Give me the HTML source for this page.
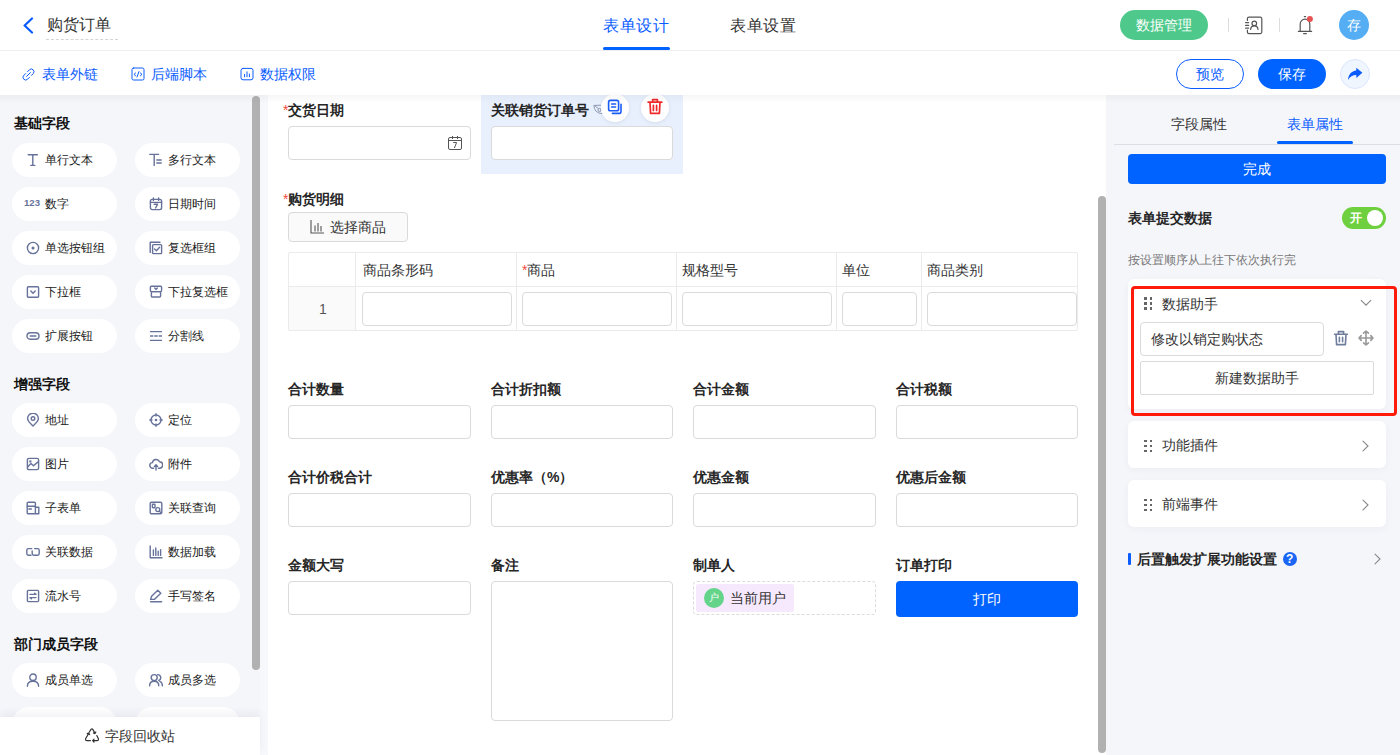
<!DOCTYPE html><html><head><meta charset="utf-8"><style>
*{box-sizing:border-box;margin:0;padding:0}
html,body{width:1400px;height:755px;overflow:hidden;background:#fff;font-family:"Liberation Sans",sans-serif;color:#333}
.a{position:absolute}
.t{position:absolute;white-space:nowrap;line-height:1}
.pill{position:absolute;width:105px;height:34px;border-radius:17px;background:#fff}
.pill .ic{position:absolute;left:14px;top:10px}
.pill .tx{position:absolute;left:33px;top:11px;font-size:12px;line-height:12px;color:#1a1a1a;white-space:nowrap}
.sh{position:absolute;left:14px;font-size:14px;font-weight:bold;color:#111;line-height:14px;white-space:nowrap}
.inp{position:absolute;border:1px solid #dadada;border-radius:4px;background:#fff}
</style></head><body>
<div class="a" style="left:0px;top:0px;width:1400px;height:50px;background:#fff"></div>
<div class="a" style="left:0px;top:50px;width:1400px;height:1px;background:#eceef1"></div>
<div class="a" style="left:0px;top:51px;width:1400px;height:44px;background:#fff"></div>
<div class="a" style="left:0px;top:95px;width:268px;height:660px;background:#f4f6fa"></div>
<div class="a" style="left:260px;top:95px;width:8px;height:660px;background:#f7f8fb"></div>
<div class="a" style="left:268px;top:95px;width:838px;height:660px;background:#fff"></div>
<div class="a" style="left:1106px;top:95px;width:294px;height:660px;background:#f5f6fa"></div>
<svg class="a" style="left:22px;top:17px" width="12" height="17" viewBox="0 0 12 17"><path d="M10 1.5 L2.6 8.5 L10 15.5" fill="none" stroke="#0a5cff" stroke-width="2.2" stroke-linecap="round" stroke-linejoin="round"/></svg>
<div class="t" style="left:47px;top:17px;font-size:16px;color:#333;">购货订单</div>
<div class="a" style="left:46px;top:39px;width:72px;height:0;border-top:1px dashed #d4d4d4"></div>
<div class="t" style="left:603px;top:18px;font-size:16px;color:#0a5cff;letter-spacing:0.5px">表单设计</div>
<div class="a" style="left:603px;top:47px;width:67px;height:3px;background:#0062ff;border-radius:2px"></div>
<div class="t" style="left:730px;top:18px;font-size:16px;color:#333;letter-spacing:0.5px">表单设置</div>
<div class="a" style="left:1120px;top:10px;width:88px;height:30px;background:#4ec98b;border-radius:15px"></div>
<div class="t" style="left:1136px;top:18px;font-size:14px;color:#fff;">数据管理</div>
<div class="a" style="left:1228px;top:18px;width:1px;height:14px;background:#dcdcdc"></div>
<div class="a" style="left:1279px;top:18px;width:1px;height:14px;background:#dcdcdc"></div>
<svg class="a" style="left:1244px;top:16px" width="20" height="20" viewBox="0 0 20 20"><g fill="none" stroke="#555" stroke-width="1.2" stroke-linecap="round" stroke-linejoin="round"><path d="M3.4 4.4V2.8A1.6 1.6 0 0 1 5 1.2H16.2A1.6 1.6 0 0 1 17.8 2.8V16A1.6 1.6 0 0 1 16.2 17.6H5A1.6 1.6 0 0 1 3.4 16V14.2"/><circle cx="10.3" cy="7.4" r="2.3"/><path d="M6.6 13.4C6.8 11 8.4 9.8 10.3 9.8S13.8 11 14 13.4"/><path d="M1.6 6.6H4.6M1.6 9.4H4.6M1.6 12.2H4.6"/></g></svg>
<svg class="a" style="left:1296px;top:15px" width="18" height="20" viewBox="0 0 18 20"><g fill="none" stroke="#555" stroke-width="1.2" stroke-linecap="round" stroke-linejoin="round"><path d="M2.4 16.4H15.6M3.8 16.4L4.2 15.4V9A4.8 4.8 0 0 1 13.8 9V15.4L14.2 16.4M7.6 18.6H10.4M8.4 1.6H9.6"/></g><circle cx="13.9" cy="3.9" r="3" fill="#e55353"/></svg>
<div class="a" style="left:1339px;top:10px;width:30px;height:30px;background:#55adf3;border-radius:50%"></div>
<div class="t" style="left:1347px;top:18px;font-size:14px;color:#fff;">存</div>
<svg class="a" style="left:22px;top:67.5px" width="13" height="13" viewBox="0 0 13 13"><g fill="none" stroke="#0a5cff" stroke-width="1.0" stroke-linecap="round"><path d="M5.6 3.6L7.4 1.8A2.4 2.4 0 0 1 11.2 5.6L9.4 7.4"/><path d="M7.4 9.4L5.6 11.2A2.4 2.4 0 0 1 1.8 7.4L3.6 5.6"/><path d="M4.6 8.4L8.4 4.6"/></g></svg>
<div class="t" style="left:42px;top:67px;font-size:14px;color:#0a5cff;">表单外链</div>
<svg class="a" style="left:131px;top:67px" width="14" height="14" viewBox="0 0 14 14"><g fill="none" stroke="#0a5cff" stroke-width="1.0" stroke-linecap="round" stroke-linejoin="round"><rect x="1" y="1" width="12" height="12" rx="1.5"/><path d="M4.6 6L3 7.4L4.6 8.8M9.4 6L11 7.4L9.4 8.8M8 4.6L6 10"/></g></svg>
<div class="t" style="left:151px;top:67px;font-size:14px;color:#0a5cff;">后端脚本</div>
<svg class="a" style="left:240px;top:67px" width="14" height="14" viewBox="0 0 14 14"><g fill="none" stroke="#0a5cff" stroke-width="1.0" stroke-linecap="round" stroke-linejoin="round"><rect x="1" y="1.4" width="12" height="11.4" rx="2"/><path d="M4.6 9.8V7.4M7 9.8V4.8M9.4 9.8V7"/></g></svg>
<div class="t" style="left:260px;top:67px;font-size:14px;color:#0a5cff;">数据权限</div>
<div class="a" style="left:1176px;top:59px;width:68px;height:30px;border:1px solid #0a5cff;border-radius:15px;background:#fff"></div>
<div class="t" style="left:1196px;top:67px;font-size:14px;color:#0a5cff;">预览</div>
<div class="a" style="left:1258px;top:59px;width:68px;height:30px;background:#0062ff;border-radius:15px"></div>
<div class="t" style="left:1278px;top:67px;font-size:14px;color:#fff;">保存</div>
<div class="a" style="left:1340px;top:59px;width:30px;height:30px;border:1px solid #dbe6fd;border-radius:50%;background:#f0f6ff"></div>
<svg class="a" style="left:1347px;top:66px" width="17" height="16" viewBox="0 0 17 16"><path d="M9.3 1.8L15.4 6.8L9.3 12V9C5.6 9 3 10.4 1 14C1.3 8.6 4.6 4.9 9.3 4.5Z" fill="#0a5cff"/></svg>
<div class="sh" style="top:116px">基础字段</div>
<div class="pill" style="left:12px;top:143px"><svg class="ic" width="14" height="14" viewBox="0 0 14 14"><g stroke="#67729a" stroke-width="1.4" fill="none" stroke-linecap="round" stroke-linejoin="round"><path d="M2.2 1.8H11.4M6.8 1.8V12.4M4.8 12.4H8.8"/></g></svg><div class="tx">单行文本</div></div>
<div class="pill" style="left:135px;top:143px"><svg class="ic" width="14" height="14" viewBox="0 0 14 14"><g stroke="#67729a" stroke-width="1.4" fill="none" stroke-linecap="round" stroke-linejoin="round"><path d="M0.8 1.4H9.6M5.2 1.4V12.4M7.8 7H12.2M7.8 10H12.2"/></g></svg><div class="tx">多行文本</div></div>
<div class="pill" style="left:12px;top:187px"><svg class="ic" width="18" height="14" viewBox="0 0 18 14" style="left:12px"><text x="0" y="9.3" font-family="Liberation Sans" font-weight="bold" font-size="9.6" fill="#67729a">123</text></svg><div class="tx">数字</div></div>
<div class="pill" style="left:135px;top:187px"><svg class="ic" width="14" height="14" viewBox="0 0 14 14"><g stroke="#67729a" stroke-width="1.4" fill="none" stroke-linecap="round" stroke-linejoin="round"><rect x="1.4" y="2.4" width="11.2" height="10.2" rx="1.8"/><path d="M1.4 5.4H12.6M4.4 1V3.4M9.6 1V3.4M5.2 7.2H8.6L6.6 11"/></g></svg><div class="tx">日期时间</div></div>
<div class="pill" style="left:12px;top:231px"><svg class="ic" width="14" height="14" viewBox="0 0 14 14"><g stroke="#67729a" stroke-width="1.4" fill="none" stroke-linecap="round" stroke-linejoin="round"><circle cx="7" cy="7" r="5.6"/><circle cx="7" cy="7" r="1.5" fill="#67729a" stroke="none"/></g></svg><div class="tx">单选按钮组</div></div>
<div class="pill" style="left:135px;top:231px"><svg class="ic" width="14" height="14" viewBox="0 0 14 14"><g stroke="#67729a" stroke-width="1.4" fill="none" stroke-linecap="round" stroke-linejoin="round"><path d="M1.2 11.4V1.2H11"/><rect x="3.6" y="3.6" width="9" height="9" rx="0.8"/><path d="M5.6 8L7.4 9.8L10.6 6.2"/></g></svg><div class="tx">复选框组</div></div>
<div class="pill" style="left:12px;top:275px"><svg class="ic" width="14" height="14" viewBox="0 0 14 14"><g stroke="#67729a" stroke-width="1.4" fill="none" stroke-linecap="round" stroke-linejoin="round"><rect x="1.4" y="1.8" width="11.2" height="10.4" rx="1"/><path d="M4.8 6L7 8.2L9.2 6"/></g></svg><div class="tx">下拉框</div></div>
<div class="pill" style="left:135px;top:275px"><svg class="ic" width="14" height="14" viewBox="0 0 14 14"><g stroke="#67729a" stroke-width="1.4" fill="none" stroke-linecap="round" stroke-linejoin="round"><rect x="1.4" y="1.2" width="11.2" height="5.4" rx="1"/><rect x="2.4" y="6.6" width="9.2" height="5.4" rx="1"/><path d="M5.8 3L7 4.4L8.4 3"/></g></svg><div class="tx">下拉复选框</div></div>
<div class="pill" style="left:12px;top:319px"><svg class="ic" width="14" height="14" viewBox="0 0 14 14"><g stroke="#67729a" stroke-width="1.4" fill="none" stroke-linecap="round" stroke-linejoin="round"><rect x="1" y="3.8" width="12" height="6.4" rx="3.2"/><path d="M4.2 7H9.8"/></g></svg><div class="tx">扩展按钮</div></div>
<div class="pill" style="left:135px;top:319px"><svg class="ic" width="14" height="14" viewBox="0 0 14 14"><g stroke="#67729a" stroke-width="1.4" fill="none" stroke-linecap="round" stroke-linejoin="round"><path d="M1.5 2.6H12.5M1.5 7H3.8M5.8 7H8.2M10.2 7H12.5M1.5 11.4H12.5"/></g></svg><div class="tx">分割线</div></div>
<div class="sh" style="top:377px">增强字段</div>
<div class="pill" style="left:12px;top:403px"><svg class="ic" width="14" height="14" viewBox="0 0 14 14"><g stroke="#67729a" stroke-width="1.4" fill="none" stroke-linecap="round" stroke-linejoin="round"><path d="M7 13C4.8 10.8 1.6 8.4 1.6 5.6A5.4 5.4 0 0 1 12.4 5.6C12.4 8.4 9.2 10.8 7 13Z"/><circle cx="7" cy="5.6" r="1.8"/></g></svg><div class="tx">地址</div></div>
<div class="pill" style="left:135px;top:403px"><svg class="ic" width="14" height="14" viewBox="0 0 14 14"><g stroke="#67729a" stroke-width="1.4" fill="none" stroke-linecap="round" stroke-linejoin="round"><circle cx="7" cy="7" r="5"/><circle cx="7" cy="7" r="1.3" fill="#67729a" stroke="none"/><path d="M7 0.8V3M7 11V13.2M0.8 7H3M11 7H13.2"/></g></svg><div class="tx">定位</div></div>
<div class="pill" style="left:12px;top:447px"><svg class="ic" width="14" height="14" viewBox="0 0 14 14"><g stroke="#67729a" stroke-width="1.4" fill="none" stroke-linecap="round" stroke-linejoin="round"><rect x="1.4" y="1.4" width="11.2" height="11.2" rx="1.6"/><path d="M1.6 10L5 6.6L7.4 8.8L12.4 4.6"/><circle cx="4.4" cy="4.4" r="0.5"/></g></svg><div class="tx">图片</div></div>
<div class="pill" style="left:135px;top:447px"><svg class="ic" width="14" height="14" viewBox="0 0 14 14"><g stroke="#67729a" stroke-width="1.4" fill="none" stroke-linecap="round" stroke-linejoin="round"><path d="M4.6 11.2H3.8A2.8 2.8 0 0 1 3.4 5.6A3.8 3.8 0 0 1 10.6 4.8A3.2 3.2 0 0 1 10.4 11.2H9.4"/><path d="M7 13V7.8M5.4 9.4L7 7.8L8.6 9.4"/></g></svg><div class="tx">附件</div></div>
<div class="pill" style="left:12px;top:491px"><svg class="ic" width="14" height="14" viewBox="0 0 14 14"><g stroke="#67729a" stroke-width="1.4" fill="none" stroke-linecap="round" stroke-linejoin="round"><rect x="1.2" y="1.2" width="8.2" height="11.6" rx="1"/><path d="M1.2 5.2H9.4M2.8 8H5.4M9.4 6.2H12.8V12.8H9.4"/></g></svg><div class="tx">子表单</div></div>
<div class="pill" style="left:135px;top:491px"><svg class="ic" width="14" height="14" viewBox="0 0 14 14"><g stroke="#67729a" stroke-width="1.4" fill="none" stroke-linecap="round" stroke-linejoin="round"><rect x="1.2" y="1.2" width="11.6" height="11.6" rx="1.4"/><rect x="3.4" y="3.2" width="2.6" height="3.6" rx="0.6"/><circle cx="8.8" cy="8.6" r="2"/><path d="M10.4 10.2L12.4 12.2"/></g></svg><div class="tx">关联查询</div></div>
<div class="pill" style="left:12px;top:535px"><svg class="ic" width="14" height="14" viewBox="0 0 14 14"><g stroke="#67729a" stroke-width="1.4" fill="none" stroke-linecap="round" stroke-linejoin="round"><path d="M5.8 3.6H2.4A1.6 1.6 0 0 0 0.8 5.2V8.6A1.6 1.6 0 0 0 2.4 10.2H5M8.6 3.6H11.6A1.6 1.6 0 0 1 13.2 5.2V8.6A1.6 1.6 0 0 1 11.6 10.2H7.8A1.6 1.6 0 0 1 6.2 8.6V6"/></g></svg><div class="tx">关联数据</div></div>
<div class="pill" style="left:135px;top:535px"><svg class="ic" width="14" height="14" viewBox="0 0 14 14"><g stroke="#67729a" stroke-width="1.4" fill="none" stroke-linecap="round" stroke-linejoin="round"><path d="M1.2 1V12.8H13M4.4 5V10.4M6.8 3V10.4M9.2 6.2V10.4M11.6 4.6V10.4"/></g></svg><div class="tx">数据加载</div></div>
<div class="pill" style="left:12px;top:579px"><svg class="ic" width="14" height="14" viewBox="0 0 14 14"><g stroke="#67729a" stroke-width="1.4" fill="none" stroke-linecap="round" stroke-linejoin="round"><rect x="1.4" y="1.4" width="11.2" height="11.2" rx="1"/><path d="M4 5.4H10L8.6 4.2M10 8.6H4L5.4 9.8"/></g></svg><div class="tx">流水号</div></div>
<div class="pill" style="left:135px;top:579px"><svg class="ic" width="14" height="14" viewBox="0 0 14 14"><g stroke="#67729a" stroke-width="1.4" fill="none" stroke-linecap="round" stroke-linejoin="round"><path d="M1.6 10.4L2.6 7.2L8.8 1.2L11.8 4.2L5.6 10.2ZM1.6 12.8H12.6"/></g></svg><div class="tx">手写签名</div></div>
<div class="sh" style="top:637px">部门成员字段</div>
<div class="pill" style="left:12px;top:663px"><svg class="ic" width="14" height="14" viewBox="0 0 14 14"><g stroke="#67729a" stroke-width="1.4" fill="none" stroke-linecap="round" stroke-linejoin="round"><circle cx="7" cy="4.2" r="3.2"/><path d="M1.4 13.2C1.4 9.8 3.8 8.2 7 8.2S12.6 9.8 12.6 13.2"/></g></svg><div class="tx">成员单选</div></div>
<div class="pill" style="left:135px;top:663px"><svg class="ic" width="14" height="14" viewBox="0 0 14 14"><g stroke="#67729a" stroke-width="1.4" fill="none" stroke-linecap="round" stroke-linejoin="round"><circle cx="5.2" cy="4.6" r="3"/><path d="M0.6 12.8C0.6 9.8 2.6 8.2 5.2 8.2S9.8 9.8 9.8 12.8M8.6 1.6A3 3 0 0 1 9.8 7.4M10.8 8.4C12.6 9 13.4 10.6 13.4 12.8"/></g></svg><div class="tx">成员多选</div></div>
<div class="pill" style="left:12px;top:707px"><div class="tx"></div></div>
<div class="pill" style="left:135px;top:707px"><div class="tx"></div></div>
<div class="a" style="left:252px;top:96px;width:8px;height:574px;background:#b1b1b1;border-radius:4px"></div>
<div class="a" style="left:0;top:717px;width:260px;height:38px;background:#fff;box-shadow:0 -4px 8px rgba(30,40,80,0.06)"></div>
<svg class="a" style="left:84px;top:728px" width="16" height="15" viewBox="0 0 16 15"><g fill="none" stroke="#333" stroke-width="1.2" stroke-linecap="round" stroke-linejoin="round"><path d="M5.2 4.2L7 1.4Q8 0.4 8.8 1.4L11 5.4M9.4 5L11 5.6L11.8 4"/><path d="M4.8 5.2L1.6 10.8Q1.2 12.6 3 12.6H6.4M3.2 5.6L4.8 5L5.6 6.6"/><path d="M8.6 12.6H13Q14.8 12.6 14.4 10.8L12.8 7.6M10 11.2L8.6 12.6L10 14"/></g></svg>
<div class="t" style="left:105px;top:729px;font-size:14px;color:#333;">字段回收站</div>
<div class="t" style="left:283px;top:103px;font-size:14px;font-weight:bold;color:#262626"><span style="color:#f5483b;font-weight:normal">*</span>交货日期</div>
<div class="inp" style="left:288px;top:126px;width:183px;height:34px;"></div>
<svg class="a" style="left:448px;top:136px" width="15" height="15" viewBox="0 0 15 15"><g fill="none" stroke="#555" stroke-width="1" stroke-linecap="butt" stroke-linejoin="round"><rect x="0.5" y="1.5" width="13" height="12" rx="1.5"/><path d="M0.5 4.5H13.5M4.5 0V3M9.5 0V3M5.2 6.5H8.6L6.4 12"/></g></svg>
<div class="a" style="left:481px;top:95px;width:202px;height:79px;background:#e8f0fe"></div>
<div class="t" style="left:491px;top:103px;font-size:14px;font-weight:bold;color:#262626">关联销货订单号</div>
<svg class="a" style="left:592px;top:103px" width="12" height="12" viewBox="0 0 12 12"><g fill="none" stroke="#8d9ab2" stroke-width="1" stroke-linecap="round"><path d="M2 2.6C2 7 4.6 10.4 10.2 10.6M2.2 2.4L8.6 2.2M2.6 2.6L6.4 5.6"/><circle cx="7.6" cy="7" r="1.6"/></g></svg>
<div class="a" style="left:601px;top:94px;width:28px;height:28px;background:#fff;border-radius:50%;box-shadow:0 1px 4px rgba(0,0,0,0.08)"></div>
<svg class="a" style="left:607px;top:99px" width="16" height="16" viewBox="0 0 16 16"><g fill="none" stroke="#1a5cf5" stroke-width="1.6" stroke-linecap="round" stroke-linejoin="round"><rect x="1.6" y="1.4" width="10" height="10.4" rx="1.8"/><path d="M4.6 5H8.6M4.6 8H8.6M14 5.4V12.4A2 2 0 0 1 12 14.4H5.4"/></g></svg>
<div class="a" style="left:641px;top:94px;width:28px;height:28px;background:#fff;border-radius:50%;box-shadow:0 1px 4px rgba(0,0,0,0.08)"></div>
<svg class="a" style="left:647px;top:98px" width="16" height="17" viewBox="0 0 16 17"><g fill="none" stroke="#ee2a2a" stroke-width="1.7" stroke-linecap="round" stroke-linejoin="round"><path d="M1.2 4.2H14.8M5.6 4V1.6H10.4V4M3 4.4L3.6 15.4H12.4L13 4.4M6.4 7.4V12.4M9.6 7.4V12.4"/></g></svg>
<div class="inp" style="left:491px;top:126px;width:182px;height:34px;"></div>
<div class="t" style="left:283px;top:192px;font-size:14px;font-weight:bold;color:#262626"><span style="color:#f5483b;font-weight:normal">*</span>购货明细</div>
<div class="a" style="left:288px;top:212px;width:120px;height:30px;border:1px solid #dadada;border-radius:4px;background:#fafafa"></div>
<svg class="a" style="left:310px;top:220px" width="14" height="14" viewBox="0 0 14 14"><g fill="none" stroke="#555" stroke-width="1.1"><path d="M1 0.5V13H13.5M5 6V11M8 3.5V11M11 6.5V11" stroke-linecap="square"/></g></svg>
<div class="t" style="left:330px;top:220px;font-size:14px;color:#333;">选择商品</div>
<div class="a" style="left:288px;top:252px;width:790px;height:79px;border:1px solid #ebebeb;border-radius:2px;background:#fff"></div>
<div class="a" style="left:289px;top:287px;width:67px;height:43px;background:#fafafa"></div>
<div class="a" style="left:289px;top:286px;width:789px;height:1px;background:#ebebeb"></div>
<div class="a" style="left:355px;top:253px;width:1px;height:77px;background:#ebebeb"></div>
<div class="a" style="left:516px;top:253px;width:1px;height:77px;background:#ebebeb"></div>
<div class="a" style="left:676px;top:253px;width:1px;height:77px;background:#ebebeb"></div>
<div class="a" style="left:836px;top:253px;width:1px;height:77px;background:#ebebeb"></div>
<div class="a" style="left:921px;top:253px;width:1px;height:77px;background:#ebebeb"></div>
<div class="t" style="left:363px;top:263px;font-size:14px;color:#333;">商品条形码</div>
<div class="t" style="left:522px;top:263px;font-size:14px;color:#333"><span style="color:#f5483b">*</span>商品</div>
<div class="t" style="left:682px;top:263px;font-size:14px;color:#333;">规格型号</div>
<div class="t" style="left:842px;top:263px;font-size:14px;color:#333;">单位</div>
<div class="t" style="left:927px;top:263px;font-size:14px;color:#333;">商品类别</div>
<div class="t" style="left:319px;top:302px;font-size:14px;color:#555;">1</div>
<div class="inp" style="left:362px;top:292px;width:150px;height:34px;"></div>
<div class="inp" style="left:522px;top:292px;width:150px;height:34px;"></div>
<div class="inp" style="left:682px;top:292px;width:150px;height:34px;"></div>
<div class="inp" style="left:842px;top:292px;width:75px;height:34px;"></div>
<div class="inp" style="left:927px;top:292px;width:150px;height:34px;"></div>
<div class="t" style="left:288px;top:382px;font-size:14px;font-weight:bold;color:#262626">合计数量</div>
<div class="inp" style="left:288px;top:405px;width:183px;height:34px;"></div>
<div class="t" style="left:491px;top:382px;font-size:14px;font-weight:bold;color:#262626">合计折扣额</div>
<div class="inp" style="left:491px;top:405px;width:182px;height:34px;"></div>
<div class="t" style="left:693px;top:382px;font-size:14px;font-weight:bold;color:#262626">合计金额</div>
<div class="inp" style="left:693px;top:405px;width:183px;height:34px;"></div>
<div class="t" style="left:896px;top:382px;font-size:14px;font-weight:bold;color:#262626">合计税额</div>
<div class="inp" style="left:896px;top:405px;width:182px;height:34px;"></div>
<div class="t" style="left:288px;top:470px;font-size:14px;font-weight:bold;color:#262626">合计价税合计</div>
<div class="inp" style="left:288px;top:493px;width:183px;height:34px;"></div>
<div class="t" style="left:491px;top:470px;font-size:14px;font-weight:bold;color:#262626">优惠率（%）</div>
<div class="inp" style="left:491px;top:493px;width:182px;height:34px;"></div>
<div class="t" style="left:693px;top:470px;font-size:14px;font-weight:bold;color:#262626">优惠金额</div>
<div class="inp" style="left:693px;top:493px;width:183px;height:34px;"></div>
<div class="t" style="left:896px;top:470px;font-size:14px;font-weight:bold;color:#262626">优惠后金额</div>
<div class="inp" style="left:896px;top:493px;width:182px;height:34px;"></div>
<div class="t" style="left:288px;top:558px;font-size:14px;font-weight:bold;color:#262626">金额大写</div>
<div class="t" style="left:491px;top:558px;font-size:14px;font-weight:bold;color:#262626">备注</div>
<div class="t" style="left:693px;top:558px;font-size:14px;font-weight:bold;color:#262626">制单人</div>
<div class="t" style="left:896px;top:558px;font-size:14px;font-weight:bold;color:#262626">订单打印</div>
<div class="inp" style="left:288px;top:581px;width:183px;height:34px;"></div>
<div class="inp" style="left:491px;top:581px;width:182px;height:140px;"></div>
<div class="a" style="left:693px;top:581px;width:183px;height:34px;border:1px dashed #dcdcdc;border-radius:4px"></div>
<div class="a" style="left:696px;top:584px;width:98px;height:28px;background:#f6e9fd;border-radius:2px"></div>
<div class="a" style="left:704px;top:588px;width:20px;height:20px;background:#64d48a;border-radius:50%"></div>
<div class="t" style="left:709px;top:593px;font-size:10px;color:#fff;">户</div>
<div class="t" style="left:730px;top:591px;font-size:14px;color:#333;">当前用户</div>
<div class="a" style="left:896px;top:581px;width:182px;height:36px;background:#0062ff;border-radius:4px"></div>
<div class="t" style="left:973px;top:592px;font-size:14px;color:#fff;">打印</div>
<div class="a" style="left:1098px;top:196px;width:8px;height:557px;background:#b1b1b1;border-radius:4px"></div>
<div class="t" style="left:1171px;top:117px;font-size:14px;color:#333;">字段属性</div>
<div class="t" style="left:1287px;top:117px;font-size:14px;color:#0a5cff;">表单属性</div>
<div class="a" style="left:1114px;top:144px;width:286px;height:1px;background:#dcdfe6"></div>
<div class="a" style="left:1277px;top:141px;width:76px;height:3px;background:#0062ff;border-radius:2px"></div>
<div class="a" style="left:1128px;top:154px;width:258px;height:30px;background:#0062ff;border-radius:4px"></div>
<div class="t" style="left:1243px;top:162px;font-size:14px;color:#fff;">完成</div>
<div class="t" style="left:1128px;top:211px;font-size:14px;color:#262626;font-weight:bold;">表单提交数据</div>
<div class="a" style="left:1342px;top:207px;width:44px;height:22px;background:#6ed03e;border-radius:11px"></div>
<div class="t" style="left:1350px;top:212px;font-size:12px;color:#fff;font-weight:bold;">开</div>
<div class="a" style="left:1367px;top:210px;width:16px;height:16px;background:#fff;border-radius:50%"></div>
<div class="t" style="left:1128px;top:254px;font-size:12px;color:#777;">按设置顺序从上往下依次执行完</div>
<div class="a" style="left:1128px;top:279px;width:258px;height:130px;background:#fff;border-radius:6px;box-shadow:0 2px 8px rgba(30,40,80,0.04)"></div>
<div class="a" style="left:1144.0px;top:297px;width:2.5px;height:2.5px;background:#666"></div><div class="a" style="left:1149.5px;top:297px;width:2.5px;height:2.5px;background:#666"></div><div class="a" style="left:1144.0px;top:302px;width:2.5px;height:2.5px;background:#666"></div><div class="a" style="left:1149.5px;top:302px;width:2.5px;height:2.5px;background:#666"></div><div class="a" style="left:1144.0px;top:307px;width:2.5px;height:2.5px;background:#666"></div><div class="a" style="left:1149.5px;top:307px;width:2.5px;height:2.5px;background:#666"></div>
<div class="t" style="left:1162px;top:297px;font-size:14px;color:#333;">数据助手</div>
<svg class="a" style="left:1360px;top:299px" width="12" height="8" viewBox="0 0 12 8"><path d="M1.2 1.4L6 6.2L10.8 1.4" fill="none" stroke="#888" stroke-width="1.1" stroke-linecap="round"/></svg>
<div class="inp" style="left:1140px;top:322px;width:184px;height:34px;"></div>
<div class="t" style="left:1151px;top:332px;font-size:14px;color:#333;">修改以销定购状态</div>
<svg class="a" style="left:1333px;top:330px" width="16" height="16" viewBox="0 0 16 16"><g fill="none" stroke="#6f7c9c" stroke-width="1.6" stroke-linecap="round" stroke-linejoin="round"><path d="M1.6 4.2H14.4M5.4 4V1.6H10.6V4M3 4.4L3.6 14.6H12.4L13 4.4M6.4 7.2V11.8M9.6 7.2V11.8"/></g></svg>
<svg class="a" style="left:1358px;top:330px" width="16" height="16" viewBox="0 0 16 16"><g fill="none" stroke="#999" stroke-width="1.6" stroke-linecap="round" stroke-linejoin="round"><path d="M8 1V15M1 8H15M5.6 3.2L8 1L10.4 3.2M5.6 12.8L8 15L10.4 12.8M3.2 5.6L1 8L3.2 10.4M12.8 5.6L15 8L12.8 10.4"/></g></svg>
<div class="a" style="left:1140px;top:361px;width:234px;height:34px;border:1px solid #dadada;border-radius:2px;background:#fff"></div>
<div class="t" style="left:1215px;top:371px;font-size:14px;color:#333;">新建数据助手</div>
<div class="a" style="left:1131px;top:286px;width:266px;height:130px;border:3px solid #ff1a0a;border-radius:4px"></div>
<div class="a" style="left:1128px;top:421px;width:258px;height:47px;background:#fff;border-radius:6px;box-shadow:0 2px 8px rgba(30,40,80,0.04)"></div>
<div class="a" style="left:1144.0px;top:439.5px;width:2.5px;height:2.5px;background:#666"></div><div class="a" style="left:1149.5px;top:439.5px;width:2.5px;height:2.5px;background:#666"></div><div class="a" style="left:1144.0px;top:444.5px;width:2.5px;height:2.5px;background:#666"></div><div class="a" style="left:1149.5px;top:444.5px;width:2.5px;height:2.5px;background:#666"></div><div class="a" style="left:1144.0px;top:449.5px;width:2.5px;height:2.5px;background:#666"></div><div class="a" style="left:1149.5px;top:449.5px;width:2.5px;height:2.5px;background:#666"></div>
<div class="t" style="left:1162px;top:438px;font-size:14px;color:#333;">功能插件</div>
<svg class="a" style="left:1361px;top:440px" width="9" height="12" viewBox="0 0 9 12"><path d="M2 1.2L7 6L2 10.8" fill="none" stroke="#888" stroke-width="1.1" stroke-linecap="round"/></svg>
<div class="a" style="left:1128px;top:480px;width:258px;height:47px;background:#fff;border-radius:6px;box-shadow:0 2px 8px rgba(30,40,80,0.04)"></div>
<div class="a" style="left:1144.0px;top:498.5px;width:2.5px;height:2.5px;background:#666"></div><div class="a" style="left:1149.5px;top:498.5px;width:2.5px;height:2.5px;background:#666"></div><div class="a" style="left:1144.0px;top:503.5px;width:2.5px;height:2.5px;background:#666"></div><div class="a" style="left:1149.5px;top:503.5px;width:2.5px;height:2.5px;background:#666"></div><div class="a" style="left:1144.0px;top:508.5px;width:2.5px;height:2.5px;background:#666"></div><div class="a" style="left:1149.5px;top:508.5px;width:2.5px;height:2.5px;background:#666"></div>
<div class="t" style="left:1162px;top:497px;font-size:14px;color:#333;">前端事件</div>
<svg class="a" style="left:1361px;top:499px" width="9" height="12" viewBox="0 0 9 12"><path d="M2 1.2L7 6L2 10.8" fill="none" stroke="#888" stroke-width="1.1" stroke-linecap="round"/></svg>
<div class="a" style="left:1128px;top:553px;width:3px;height:12px;background:#0a5cff;border-radius:1px"></div>
<div class="t" style="left:1137px;top:552px;font-size:14px;color:#262626;font-weight:bold;">后置触发扩展功能设置</div>
<div class="a" style="left:1283px;top:552px;width:14px;height:14px;background:#1b66f5;border-radius:50%"></div>
<div class="t" style="left:1286px;top:553px;font-size:12px;color:#fff;font-weight:bold;">?</div>
<svg class="a" style="left:1373px;top:553px" width="9" height="12" viewBox="0 0 9 12"><path d="M2 1.2L7 6L2 10.8" fill="none" stroke="#888" stroke-width="1.1" stroke-linecap="round"/></svg>
<div class="a" style="left:0;top:95px;width:1400px;height:9px;background:linear-gradient(rgba(0,0,0,0.035),rgba(0,0,0,0.012) 60%,rgba(0,0,0,0))"></div>
</body></html>
